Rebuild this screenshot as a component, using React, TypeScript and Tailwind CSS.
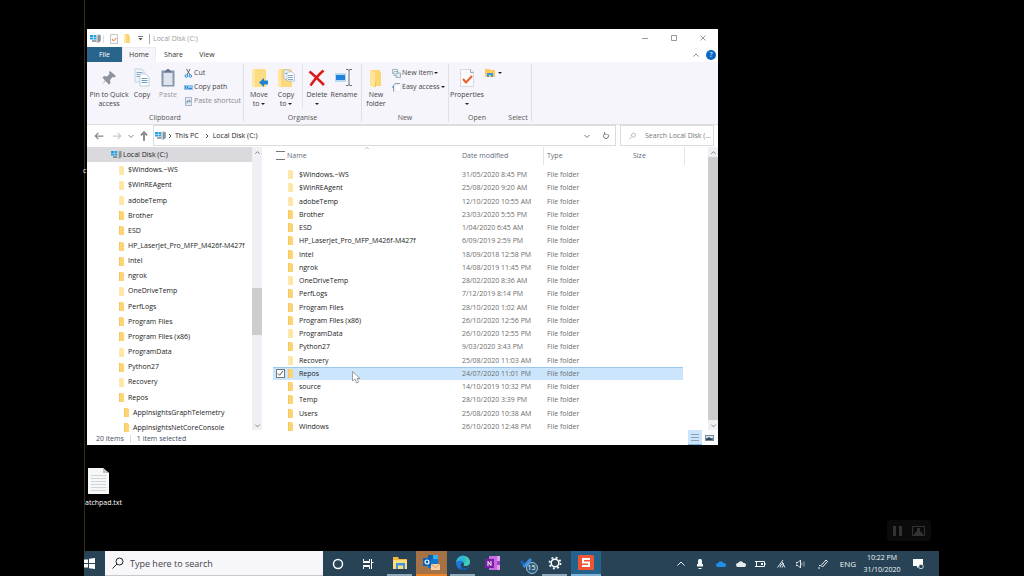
import React, { FC, ReactNode, useState } from 'react';

interface Folder {
  name: string;
  date: string;
  pale?: boolean;
}

const folders: Folder[] = [
  { name: '$Windows.~WS', date: '31/05/2020 8:45 PM', pale: true },
  { name: '$WinREAgent', date: '25/08/2020 9:20 AM', pale: true },
  { name: 'adobeTemp', date: '12/10/2020 10:55 AM', pale: true },
  { name: 'Brother', date: '23/03/2020 5:55 PM' },
  { name: 'ESD', date: '1/04/2020 6:45 AM' },
  { name: 'HP_LaserJet_Pro_MFP_M426f-M427f', date: '6/09/2019 2:59 PM' },
  { name: 'Intel', date: '18/09/2018 12:58 PM' },
  { name: 'ngrok', date: '14/08/2019 11:45 PM' },
  { name: 'OneDriveTemp', date: '28/02/2020 8:36 AM', pale: true },
  { name: 'PerfLogs', date: '7/12/2019 8:14 PM' },
  { name: 'Program Files', date: '28/10/2020 1:02 AM' },
  { name: 'Program Files (x86)', date: '26/10/2020 12:56 PM' },
  { name: 'ProgramData', date: '26/10/2020 12:55 PM', pale: true },
  { name: 'Python27', date: '9/03/2020 3:43 PM' },
  { name: 'Recovery', date: '25/08/2020 11:03 AM', pale: true },
  { name: 'Repos', date: '24/07/2020 11:01 PM' },
  { name: 'source', date: '14/10/2019 10:32 PM' },
  { name: 'Temp', date: '28/10/2020 3:39 PM' },
  { name: 'Users', date: '25/08/2020 10:38 AM' },
  { name: 'Windows', date: '26/10/2020 12:48 PM' }
];

const treeFolders = folders.slice(0, 16);
const repoFolders = ['AppInsightsGraphTelemetry', 'AppInsightsNetCoreConsole'];

interface IconProps {
  className?: string;
}

const FolderIcon: FC<{ pale?: boolean }> = ({ pale }) => (
  <svg viewBox="0 0 5 9" className="h-[9px] w-[5px] shrink-0">
    <path d="M0 0h4v1h1v8H0z" fill={pale ? '#ffe7a3' : '#fdd373'} />
    <path d="M0 0h1v9H0z" fill={pale ? '#fbe9bd' : '#f3c766'} />
  </svg>
);

const DriveIcon: FC = () => (
  <svg viewBox="0 0 11 9" className="h-[9px] w-[11px] shrink-0">
    <path d="M6 1.500L8.500 0 11 1.500V7L8 9 6 8z" fill="#c3c8cd" />
    <path d="M8 1.500l2.500-.5v6L8 8.500z" fill="#8b939b" />
    <path d="M0 1h3v2H0zM3.500 1H6v2H3.500zM0 3.500h3v2H0zM3.500 3.500H6v2H3.500z" fill="#22a0e0" />
    <path d="M2 6.500h4v1H2z" fill="#3e4d5b" />
  </svg>
);

const Chevron: FC<IconProps & { d: string }> = ({ d, className = 'h-2 w-2' }) => (
  <svg viewBox="0 0 8 8" className={className} fill="none" stroke="currentColor">
    <path d={d} />
  </svg>
);
const UP = 'M1.500 5.500L4 3l2.500 2.500';
const DOWN = 'M1.500 3L4 5.500 6.500 3';
const RIGHT = 'M3 2l2 2-2 2';

const Caret: FC = () => (
  <svg viewBox="0 0 4 2" className="inline-block h-[2px] w-1 align-middle">
    <path d="M0 0h4L2 2z" fill="#222" />
  </svg>
);

const PinIcon = () => (
  <svg viewBox="0 0 20 20" className="size-5">
    <path
      d="M11 3l6 5-2 1.500-1.500-.5-2.500 3 .5 3-1.500 1.500-3.500-3.500L3 17l3-4.500L3.500 9.500 5 8l3 .5L10.500 6 10 4z"
      fill="#8c949c"
    />
  </svg>
);

const CopyIcon = () => (
  <svg viewBox="0 0 20 20" className="size-5">
    <path d="M3 1h7l2 2v11H3z" fill="#eef3f8" stroke="#bccbd8" strokeWidth=".8" />
    <path d="M4.500 4.500h6M4.500 6.500h6M4.500 8.500h6" stroke="#82a9ca" />
    <path d="M8 6h6l3 3v9H8z" fill="#fff" stroke="#b4c4d2" strokeWidth=".8" />
    <path d="M9.500 10.500h6M9.500 12.500h6M9.500 14.500h6" stroke="#6d9dc5" />
  </svg>
);

const PasteIcon = () => (
  <svg viewBox="0 0 20 20" className="size-5">
    <rect x="3.500" y="2.500" width="13" height="16" fill="#8797ad" />
    <rect x="5.500" y="5" width="9" height="12" fill="#dde4ee" />
    <path d="M7 4V2.500h1.500L9 1h2l.5 1.500H13V4z" fill="#66748a" />
  </svg>
);

const MoveIcon = () => (
  <svg viewBox="0 0 20 20" className="size-5">
    <path d="M3 1h13l1 1v17H3z" fill="#fbdc83" />
    <path d="M3 1h3v18H3z" fill="#ffe7a6" />
    <path d="M10 14.500l5-4.500v2.500h4v4h-4V19z" fill="#2382d0" />
  </svg>
);

const CopyToIcon = () => (
  <svg viewBox="0 0 20 20" className="size-5">
    <path d="M2 1h12l2 1v17H2z" fill="#fbd97c" />
    <path d="M2 1h3v18H2z" fill="#ffe6a2" />
    <path d="M8 2h5l1 1v8H8z" fill="#f4f8fc" stroke="#a2b6c8" strokeWidth=".7" />
    <path d="M11 4h5l2.500 2v7H11z" fill="#fff" stroke="#a2b6c8" strokeWidth=".7" />
    <path d="M12 7.500h5M12 9.500h5M12 11.500h5M9 5.500h2" stroke="#6391bb" strokeWidth=".8" />
  </svg>
);

const DeleteIcon = () => (
  <svg viewBox="0 0 20 20" className="size-5">
    <path d="M2.500 3.500Q8 8 17 17M16.500 2.500Q10 8 3.500 17.500" stroke="#dc1717" strokeWidth="2.500" fill="none" />
  </svg>
);

const RenameIcon = () => (
  <svg viewBox="0 0 20 20" className="size-5">
    <path d="M1 5h11v9H1z" fill="#b9d9f3" />
    <path d="M2 7h9v5H2z" fill="#1f83dc" />
    <path d="M12 1.500h2l1 .8 1-.8h2M12 17.500h2l1-.8 1 .8h2M15 2v15" stroke="#6a747d" fill="none" />
  </svg>
);

const NewFolderIcon = () => (
  <svg viewBox="0 0 20 20" className="size-5">
    <path d="M4 2h10v2h1v14H4z" fill="#fcd675" />
    <path d="M4 2l5 2v16l-5-3z" fill="#ffe49b" />
    <path d="M9 14h1v5H9z" fill="#f1bf57" />
  </svg>
);

const PropertiesIcon = () => (
  <svg viewBox="0 0 20 20" className="size-5">
    <path d="M3.500 1.500h10l3 3v14h-13z" fill="#fbfbfd" stroke="#d0d2d8" strokeWidth=".8" />
    <path d="M13.500 1.500v3h3" fill="none" stroke="#8b9198" strokeWidth=".8" />
    <path d="M6 11l3 3.500L15 8" fill="none" stroke="#e9642a" strokeWidth="2" />
  </svg>
);

const ScissorsIcon = () => (
  <svg viewBox="0 0 9 9" className="size-[9px]" fill="none">
    <path d="M2.500 0l3.500 6M6 0L3 6" stroke="#5b6b7a" />
    <circle cx="2.300" cy="7" r="1.300" stroke="#2d8fdb" />
    <circle cx="6.300" cy="7" r="1.300" stroke="#2d8fdb" />
  </svg>
);

const CopyPathIcon = () => (
  <svg viewBox="0 0 9 9" className="size-[9px]">
    <path d="M0 2h9v5H0z" fill="#8fc8f2" />
    <path d="M1 3l1 3M3 3l1 3M5 5.500h3" stroke="#1d6fb5" strokeWidth=".8" />
  </svg>
);

const ShortcutIcon = () => (
  <svg viewBox="0 0 9 9" className="size-[9px]">
    <path d="M1.500.5h6v8h-6z" fill="#e6ebf2" stroke="#9aa9bd" strokeWidth=".8" />
    <path d="M3 6.500V4h3M5 3l1.500 1L5 5.500" fill="none" stroke="#5d7da6" strokeWidth=".8" />
  </svg>
);

const NewItemIcon = () => (
  <svg viewBox="0 0 9 9" className="size-[9px]" fill="#fff" stroke="#8ba0b0" strokeWidth=".8">
    <path d="M.5.5h5v4h-5z" />
    <path d="M2 2.500h4v4H2z" />
    <path d="M4 4h4.500v4.500H4z" fill="#dcebf7" />
  </svg>
);

const EasyAccessIcon = () => (
  <svg viewBox="0 0 9 9" className="size-[9px]" fill="none">
    <path d="M1.500 8.500v-6L3 .5h5" stroke="#8ba0b0" />
    <path d="M3 2h5.500v6.500H3z" fill="#fff" stroke="#dfe5ea" strokeWidth=".6" />
    <path d="M0 4h2" stroke="#2d8fdb" />
  </svg>
);

interface BigButtonProps {
  icon: ReactNode;
  lines: string[];
  caret?: boolean;
  className: string;
}
const BigButton: FC<BigButtonProps> = ({ icon, lines, caret, className }) => (
  <button type="button" className={`flex shrink-0 flex-col items-center whitespace-nowrap ${className}`}>
    {icon}
    {lines.map((line, i) => (
      <span key={line} className={`leading-[9px] ${i === 0 ? 'mt-0.5' : ''}`}>
        {line} {caret && i === 1 && <Caret />}
      </span>
    ))}
    {caret && lines.length === 1 && (
      <span className="leading-[9px]">
        <Caret />
      </span>
    )}
  </button>
);

const SmallButton: FC<{ icon: ReactNode; label: string; caret?: boolean; className?: string }> = ({
  icon,
  label,
  caret,
  className = ''
}) => (
  <button type="button" className={`flex h-[14px] items-center gap-px whitespace-nowrap ${className}`}>
    {icon}
    <span>{label}</span>
    {caret && <Caret />}
  </button>
);

const Group: FC<{ label: string; className: string; children?: ReactNode }> = ({
  label,
  className,
  children
}) => (
  <section className={`flex shrink-0 flex-col justify-between ${className}`}>
    <div className="flex items-start">{children}</div>
    <h2 className="text-center leading-[8px] text-[#555]">{label}</h2>
  </section>
);

const TitleBar = () => (
  <header className="flex h-[18px] items-center justify-between">
    <div className="flex items-center pt-px pl-[3px] text-[#999]">
      <DriveIcon />
      <span className="ml-0.5 h-2 w-px bg-[#ddd]" />
      <svg viewBox="0 0 8 10" className="ml-1.5 h-2.5 w-2">
        <path d="M.5.500h7v9h-7z" fill="#fafafa" stroke="#b9b9bd" strokeWidth=".8" />
        <path d="M2 5l1.500 2L6.500 4" fill="none" stroke="#ea6d35" />
      </svg>
      <svg viewBox="0 0 7 9" className="ml-1.5 h-[9px] w-[7px]">
        <path d="M0 0h5v2h1v7H0z" fill="#fbd57c" />
        <path d="M0 0l2 1v8H0z" fill="#ffe7a8" />
      </svg>
      <svg viewBox="0 0 5 5" className="ml-[7px] size-[5px]">
        <path d="M0 .5h5" stroke="#777" />
        <path d="M.5 2h4l-2 2.500z" fill="#555" />
      </svg>
      <span className="mr-[3px] ml-1.5 h-2.5 w-px bg-[#aaa]" />
      <h1>Local Disk (C:)</h1>
    </div>
    <div className="flex items-center gap-[21px] pr-[11px] text-[#999]">
      <button type="button" aria-label="Minimise">
        <Chevron d="M1 4.500h6" />
      </button>
      <button type="button" aria-label="Maximise">
        <Chevron d="M1.500 1.500h5v5h-5z" />
      </button>
      <button type="button" aria-label="Close">
        <Chevron d="M1.500 1.500l5 5M6.500 1.500l-5 5" />
      </button>
    </div>
  </header>
);

const Tabs = () => (
  <nav className="flex h-[15px] items-stretch justify-between">
    <div className="flex text-[#333]">
      <button type="button" className="w-[35px] bg-[#28648c] pt-px text-white">
        File
      </button>
      <button type="button" className="w-[34px] border-x border-t border-[#ececf2] bg-[#f5f5fb]">
        Home
      </button>
      <button type="button" className="w-[35px] pt-px">
        Share
      </button>
      <button type="button" className="w-8 pt-px">
        View
      </button>
    </div>
    <div className="flex items-center gap-1.5 pr-0.5 text-[#888]">
      <button type="button" aria-label="Collapse ribbon">
        <Chevron d={UP} />
      </button>
      <button
        type="button"
        aria-label="Help"
        className="size-2.5 rounded-full bg-[#0a68c4] text-center leading-[10px] text-white">
        ?
      </button>
    </div>
  </nav>
);

const Ribbon = () => (
  <div className="flex h-[63px] border-b border-[#dedee2] bg-[#f5f5fb] py-0.5 text-[#444]">
    <Group label="Clipboard" className="w-[157px] border-r border-[#dfe0e6]">
      <BigButton icon={<PinIcon />} lines={['Pin to Quick', 'access']} className="mt-1 w-[44px]" />
      <BigButton icon={<CopyIcon />} lines={['Copy']} className="mt-1 w-[22px]" />
      <div className="mt-1 text-[#999]">
        <BigButton icon={<PasteIcon />} lines={['Paste']} className="w-[30px]" />
      </div>
      <div className="ml-px flex flex-col pt-0.5">
        <SmallButton icon={<ScissorsIcon />} label="Cut" />
        <SmallButton icon={<CopyPathIcon />} label="Copy path" />
        <SmallButton icon={<ShortcutIcon />} label="Paste shortcut" className="text-[#888]" />
      </div>
    </Group>
    <Group label="Organise" className="w-[118px] border-r border-[#dfe0e6]">
      <BigButton icon={<MoveIcon />} lines={['Move', 'to']} caret className="mt-1 w-[30px]" />
      <BigButton icon={<CopyToIcon />} lines={['Copy', 'to']} caret className="mt-1 w-6" />
      <span className="ml-1 h-[44px] w-px bg-[#e2e3e8]" />
      <BigButton icon={<DeleteIcon />} lines={['Delete']} caret className="mt-1 w-7" />
      <BigButton icon={<RenameIcon />} lines={['Rename']} className="mt-1 w-[26px]" />
    </Group>
    <Group label="New" className="w-[87px] border-r border-[#dfe0e6]">
      <BigButton icon={<NewFolderIcon />} lines={['New', 'folder']} className="mt-1 w-[28px]" />
      <div className="ml-0.5 flex flex-col pt-0.5">
        <SmallButton icon={<NewItemIcon />} label="New item" caret />
        <SmallButton icon={<EasyAccessIcon />} label="Easy access" caret />
      </div>
    </Group>
    <Group label="Open" className="w-[56px]">
      <BigButton icon={<PropertiesIcon />} lines={['Properties']} caret className="mt-1 w-[36px]" />
      <button type="button" aria-label="Open" className="mt-[5px] flex items-center gap-[3px]">
        <svg viewBox="0 0 10 8" className="h-2 w-2.5">
          <path d="M0 0h4l1 1h5v7H0z" fill="#fccb57" />
          <path d="M2 4h6v4H6V6H4v2H2z" fill="#3d9be6" />
        </svg>
        <Caret />
      </button>
    </Group>
    <Group label="Select" className="w-[27px] border-r border-[#dfe0e6]" />
  </div>
);

const AddressBar = () => (
  <div className="flex h-[21px] items-center gap-1 pr-1 text-[#222]">
    <div className="flex shrink-0 items-center pl-[7px] text-[#888]">
      <button type="button" aria-label="Back">
        <Chevron d="M7.500 4H1M3.500 1.500L1 4l2.500 2.500" className="size-2.5" />
      </button>
      <button type="button" aria-label="Forward" className="ml-2 text-[#ccc]">
        <Chevron d="M.5 4H7M4.500 1.500L7 4 4.500 6.500" className="size-2.5" />
      </button>
      <button type="button" aria-label="Recent locations" className="ml-[5px]">
        <Chevron d={DOWN} />
      </button>
      <button type="button" aria-label="Up" className="ml-1">
        <Chevron d="M4 8V1M1.500 3.500L4 1l2.500 2.500" className="size-2.5 stroke-[1.5]" />
      </button>
    </div>
    <div className="flex h-[21px] min-w-0 flex-1 items-center border border-[#dcdcdc] pl-px">
      <DriveIcon />
      <Chevron d={RIGHT} className="size-2 text-[#555]" />
      <a href="#pc" className="ml-px">
        This PC
      </a>
      <Chevron d={RIGHT} className="ml-1 size-2 text-[#555]" />
      <a href="#c" className="ml-0.5">
        Local Disk (C:)
      </a>
      <button type="button" aria-label="Previous locations" className="mr-[11px] ml-auto text-[#777]">
        <Chevron d={DOWN} />
      </button>
      <button type="button" aria-label="Refresh" className="mr-[5px] text-[#777]">
        <Chevron d="M5.500 2A2.500 2.500 0 1 1 2.500 2M2.500 .2v2h2" />
      </button>
    </div>
    <label className="flex h-[21px] w-[94px] shrink-0 items-center border border-[#dcdcdc] pl-2">
      <Chevron d="M0 7.500l3-3M3 4.500a2 2 0 1 1 3 0 2 2 0 0 1-3 0" className="size-2 shrink-0 text-[#bbb]" />
      <input
        type="text"
        aria-label="Search"
        placeholder="Search Local Disk (..."
        className="ml-2 w-full min-w-0 outline-none placeholder:text-[#777]"
      />
    </label>
  </div>
);

const ScrollButton: FC<{ d: string; label: string }> = ({ d, label }) => (
  <button
    type="button"
    aria-label={label}
    className="flex h-2.5 w-full shrink-0 items-center justify-center text-[#777]">
    <Chevron d={d} className="size-[7px]" />
  </button>
);

const TreePane = () => (
  <aside className="flex h-[283px] w-[175px] shrink-0">
    <div className="min-w-0 flex-1 text-[#222]">
      <ul className="grid h-[288px] auto-rows-fr whitespace-nowrap">
        <li className="flex items-center gap-px bg-[#d9d9de] pl-6">
          <DriveIcon />
          Local Disk (C:)
        </li>
        {treeFolders.map((folder) => (
          <li key={folder.name} className="flex items-center gap-1 pt-px pl-8">
            <FolderIcon pale={folder.pale} />
            {folder.name}
          </li>
        ))}
        {repoFolders.map((name) => (
          <li key={name} className="flex items-center gap-1 pt-px pl-[37px]">
            <FolderIcon />
            {name}
          </li>
        ))}
      </ul>
    </div>
    <div className="flex w-2.5 flex-col bg-[#f0f0f4]">
      <ScrollButton d={UP} label="Scroll up" />
      <div className="flex flex-1 flex-col justify-end pb-[85px]">
        <div className="h-[47px] bg-[#cdcdcd]" />
      </div>
      <ScrollButton d={DOWN} label="Scroll down" />
    </div>
  </aside>
);

const FileList = () => {
  const [selected, setSelected] = useState('Repos');
  return (
    <div className="min-w-0 flex-1 pr-[25px] pl-[11px]">
      <table className="h-[286px] w-full table-fixed border-separate border-spacing-0 text-left whitespace-nowrap">
        <colgroup>
          <col className="w-[26px]" />
          <col />
          <col className="w-[81px]" />
          <col className="w-[90px]" />
          <col className="w-[50px]" />
        </colgroup>
        <thead className="leading-[18px] text-[#5f6b7a]">
          <tr className="h-[21px] align-top">
            <th className="px-0 pt-1 pl-[3px] font-normal">
              <input
                type="checkbox"
                aria-label="Select all"
                className="block size-[9px] appearance-none border-y border-[#777] bg-white"
              />
            </th>
            <th className="p-0 font-normal">
              <span className="relative -ml-3 block">
                Name
                <Chevron d={UP} className="absolute top-[-2px] left-[77px] size-1.5 text-[#aaa]" />
              </span>
            </th>
            <th className="p-0 font-normal">Date modified</th>
            <th className="p-0 font-normal">
              <div className="border-l border-[#e4e4e8] pl-[3px]">Type</div>
            </th>
            <th className="p-0 font-normal">
              <div className="-mr-0.5 border-r border-[#e4e4e8]">Size</div>
            </th>
          </tr>
        </thead>
        <tbody className="text-[#6d6d6d]">
          {folders.map((folder) => {
            const isSelected = folder.name === selected;
            return (
              <tr
                key={folder.name}
                onClick={() => setSelected(folder.name)}
                className={isSelected ? 'bg-[#cbe6fc] shadow-[inset_0_1px_0_#9ac7ee]' : ''}>
                <td className="p-0">
                  <div className="flex items-center justify-between pr-1.5 pl-[3px]">
                    {isSelected ? (
                      <span className="flex size-[9px] items-center justify-center border border-[#777] bg-white text-[#333]">
                        <Chevron d="M1 4l2 2 4-5" className="size-[7px]" />
                      </span>
                    ) : (
                      <span />
                    )}
                    <FolderIcon pale={folder.pale} />
                  </div>
                </td>
                <td className="p-0 pt-px text-[#222]">{folder.name}</td>
                <td className="p-0 pt-px">{folder.date}</td>
                <td className="p-0 pt-px pl-1">File folder</td>
                <td className="p-0" />
              </tr>
            );
          })}
        </tbody>
      </table>
    </div>
  );
};

const StatusBar = () => (
  <footer className="flex h-[15px] items-center justify-between text-[#3f4d63]">
    <div className="flex items-center pt-0.5 pl-[9px]">
      <span>20 items</span>
      <span className="mx-1.5 h-2 w-px bg-[#ddd]" />
      <span>1 item selected</span>
    </div>
    <div className="flex items-center self-stretch pr-1">
      <button
        type="button"
        aria-label="Details"
        className="flex h-full w-3.5 items-center justify-center border-b border-[#7fb5e2] bg-[#cbe6fc]">
        <Chevron d="M0 1.500h8M0 4.500h8M0 7.500h8" className="size-2 text-[#8ba0b1]" />
      </button>
      <button type="button" aria-label="Large icons" className="ml-[3px]">
        <svg viewBox="0 0 9 6" className="h-1.5 w-[9px]">
          <path d="M0 0h9v6H0z" fill="#7a8996" />
          <path d="M1 1h7v2H1z" fill="#cfe4f4" />
          <path d="M1 4l3-2 4 3H1z" fill="#2f4b5e" />
        </svg>
      </button>
    </div>
  </footer>
);

const Explorer = () => (
  <main className="mt-[29px] mr-[221px] ml-0.5 bg-white text-[7px] leading-[10px]">
    <TitleBar />
    <Tabs />
    <Ribbon />
    <AddressBar />
    <div className="flex h-[284px] pt-px">
      <TreePane />
      <FileList />
      <div className="flex w-2.5 flex-col bg-[#f0f0f4]">
        <ScrollButton d={UP} label="Scroll list up" />
        <div className="flex-1 bg-[#cdcdcd]" />
        <ScrollButton d={DOWN} label="Scroll list down" />
      </div>
    </div>
    <StatusBar />
  </main>
);

interface TaskButtonProps {
  label: string;
  className: string;
  children: ReactNode;
}
const TaskButton: FC<TaskButtonProps> = ({ label, className, children }) => (
  <button type="button" aria-label={label} className={`flex h-full shrink-0 items-center justify-center ${className}`}>
    {children}
  </button>
);

const TaskApps = () => (
  <div className="flex h-full">
    <TaskButton label="Cortana" className="w-[29px]">
      <svg viewBox="0 0 12 12" className="size-3">
        <circle cx="6" cy="6" r="4.500" fill="none" stroke="#fff" strokeWidth="1.500" />
      </svg>
    </TaskButton>
    <TaskButton label="Task view" className="w-[31px]">
      <svg viewBox="0 0 12 12" className="size-3" fill="none" stroke="#fff">
        <path d="M1.500 1v2.500h6V1M1.500 11V8.500h6V11M1 4.500h7M1 7.500h7M9.500 1v10M9 4.500h2.500" />
      </svg>
    </TaskButton>
    <TaskButton label="File Explorer" className="mx-1 w-[25px] border-b-2 border-[#8fa9ba]">
      <svg viewBox="0 0 16 13" className="h-[13px] w-4">
        <path d="M1 1h5l1 2h8v10H1z" fill="#f3b73f" />
        <path d="M1 4h14v9H1z" fill="#fddb7e" />
        <path d="M4 7h9v6h-2V9.500H6V13H4z" fill="#3f95dc" />
      </svg>
    </TaskButton>
    <TaskButton label="Outlook" className="w-[31px] border-b-2 border-[#f08222] bg-[#a47246]">
      <svg viewBox="0 0 17 17" className="size-[17px]">
        <path d="M5 1h10v13H5z" fill="#1277cf" />
        <path d="M5 1h5v4H5z" fill="#0f5ba8" />
        <path d="M10 1h5v4h-5z" fill="#35b1f0" />
        <path d="M0 4h8v8H0z" fill="#0a61b8" />
        <circle cx="4" cy="8" r="2" fill="none" stroke="#fff" strokeWidth="1.200" />
        <path d="M8 10h9v6H8z" fill="#f9cfa5" />
        <path d="M8 10l4.500 3.500L17 10" fill="none" stroke="#d98a4b" strokeWidth=".8" />
      </svg>
    </TaskButton>
    <TaskButton label="Edge" className="mx-[3px] w-[25px] border-b-2 border-[#8fa9ba]">
      <svg viewBox="0 0 16 16" className="size-4">
        <path d="M1 8a7 7 0 0 1 14-1c0 3-2.500 4-5 4-1.500 0-1.200-1-1-2C9 6 3 5 1 8z" fill="#2fb5d6" />
        <path d="M9 1.200c4 .3 6 3 6 5.800-.3 3-2.500 4-5 4-1.500 0-1.200-1-1-2 2-2 2-5 0-7.800z" fill="#41cbb0" />
        <path d="M1 8c2-3.500 7-3 8 0-2-1-3.500.5-3 2.500.6 3 4.500 3.500 8 1.500A7.200 7.200 0 0 1 1 8z" fill="#1b7ad4" />
        <path d="M6 10.500c.6 3 4.500 3.500 8 1.500-1.500 2.500-4 3.500-6.500 3C5 14 5 12 6 10.500z" fill="#1259ad" />
      </svg>
    </TaskButton>
    <TaskButton label="OneNote" className="w-[29px]">
      <svg viewBox="0 0 16 15" className="h-[15px] w-4">
        <path d="M4 0h11v14H4z" fill="#c86be2" />
        <path d="M12 0h3v14h-3z" fill="#e29df2" />
        <path d="M12 5h3v4h-3z" fill="#a13fc4" />
        <path d="M0 3h9v9H0z" fill="#7a1fa2" />
        <path d="M3 10V5.500l3 4V5" fill="none" stroke="#fff" />
      </svg>
    </TaskButton>
    <TaskButton label="To Do" className="w-[35px] pl-2">
      <span className="relative flex h-4 w-5 items-start">
        <svg viewBox="0 0 14 11" className="mt-0.5 h-[11px] w-3.5">
          <path d="M1 4l2-2 4 4-2 3z" fill="#1b60b5" />
          <path d="M3.500 8L11 0l2 2-7.500 8z" fill="#3b8fe2" />
        </svg>
        <span className="absolute right-px -bottom-0.5 size-3 rounded-full border border-[#9cc3da] bg-[#2c5c7c] text-center text-[7px] leading-[10px] text-white">
          15
        </span>
      </span>
    </TaskButton>
    <TaskButton label="Settings" className="mr-1 w-[25px] border-b-2 border-[#8fa9ba]">
      <svg viewBox="0 0 14 14" className="size-3.5" fill="none" stroke="#fff">
        <circle cx="7" cy="7" r="3.800" strokeWidth="1.500" />
        <circle cx="7" cy="7" r="5.500" strokeWidth="1.800" strokeDasharray="1.900 2.420" />
      </svg>
    </TaskButton>
    <TaskButton label="Snagit" className="w-[30px] border-b-2 border-[#7fb4d8] bg-[#24628c]">
      <svg viewBox="0 0 16 15" className="h-[15px] w-4">
        <rect width="16" height="15" rx="1.500" fill="#ee5535" />
        <path d="M12 4H5v3.500h6V11H4" fill="none" stroke="#fff" strokeWidth="2" />
      </svg>
    </TaskButton>
  </div>
);

const Tray = () => (
  <div className="flex h-full items-center text-[#f2f6f8]">
    <Chevron d="M.5 5.500L4 2l3.500 3.500" />
    <svg viewBox="0 0 8 10" className="ml-[11px] h-2.5 w-2" fill="currentColor">
      <rect x="2" width="4" height="7" rx="1.500" />
      <path d="M1 5h6v2.500H1zM2.500 9h3v1h-3z" />
    </svg>
    <svg viewBox="0 0 10 6" className="ml-3 h-1.5 w-2.5">
      <path d="M2 6a2 2 0 0 1 0-4 3 3 0 0 1 5.500 0A2 2 0 0 1 8.500 6z" fill="#1f8fe8" />
    </svg>
    <svg viewBox="0 0 10 6" className="ml-2.5 h-1.5 w-2.5">
      <path d="M2 6a2 2 0 0 1 0-4 3 3 0 0 1 5.500 0A2 2 0 0 1 8.500 6z" fill="#e8ecee" />
    </svg>
    <svg viewBox="0 0 11 8" className="ml-[9px] h-2 w-[11px]" fill="none" stroke="currentColor">
      <path d="M1.500 1.500h8v5h-8zM10 4h1M0 1.500h2M0 6.500h2" />
      <path d="M6 3h2v2H6z" fill="currentColor" stroke="none" />
    </svg>
    <svg viewBox="0 0 9 9" className="ml-[11px] size-[9px]" fill="none" stroke="currentColor" strokeWidth=".9">
      <path d="M.5 8.500L6 1M3 8.500a4 4 0 0 1 4-4M5 8.500a2 2 0 0 1 2-2M5 3l3 5.500" />
    </svg>
    <svg viewBox="0 0 10 10" className="ml-2.5 size-2.5" fill="none" stroke="currentColor" strokeWidth=".9">
      <path d="M0 3.500h2L4.500 1v8L2 6.500H0z" />
      <path d="M6 3.500v3M8 2.500v5" opacity=".6" />
    </svg>
    <svg viewBox="0 0 10 10" className="ml-3 size-2.5" fill="none" stroke="currentColor">
      <path d="M3 6.500L8 1l1.500 1.500L4.500 8zM0 9h2M1 6.500h1.500" />
    </svg>
    <span className="ml-3 text-[8px]">ENG</span>
    <time className="ml-1.5 w-10 text-center text-[7px] leading-[12px]">
      10:22 PM
      <br />
      31/10/2020
    </time>
    <button type="button" aria-label="Notifications" className="mr-[15px] ml-[11px]">
      <svg viewBox="0 0 11 10" className="h-2.5 w-[11px]">
        <path d="M0 0h10v7H7L4 9V7H0z" fill="#fff" />
        <circle cx="8" cy="7.500" r="2.300" fill="#274355" stroke="#fff" strokeWidth=".8" />
      </svg>
    </button>
  </div>
);

const Taskbar = () => (
  <div className="flex h-[25px] shrink-0 items-center justify-between bg-[#274355]">
    <div className="flex h-full">
      <TaskButton label="Start" className="w-[21px] justify-start">
        <svg viewBox="0 0 11 11" className="size-[11px]" fill="#fff">
          <path d="M0 1.500h4V5H0zM5 .8l6-.8v5H5zM0 6h4v3.500H0zM5 6h6v5l-6-.8z" />
        </svg>
      </TaskButton>
      <label className="flex h-full w-[218px] items-center border-b border-[#c8c8c8] bg-[#f6f6fb] pl-[7px]">
        <svg viewBox="0 0 12 12" className="size-3 shrink-0" fill="none" stroke="#222">
          <circle cx="7.500" cy="4.500" r="3.500" />
          <path d="M5 7l-4.500 4.500" />
        </svg>
        <input
          type="text"
          aria-label="Search Windows"
          placeholder="Type here to search"
          className="ml-1.5 w-full min-w-0 pt-px text-[9px] outline-none placeholder:text-[#444]"
        />
      </label>
      <TaskApps />
    </div>
    <Tray />
  </div>
);

const App: FC = () => (
  <div className="flex h-screen flex-col bg-black pr-[85px] pl-[84px] font-['Open_Sans','Noto_Sans',sans-serif]">
    <div className="relative flex-1 border-l border-[#3a2a10]">
      <Explorer />
      {/* desktop icons, partly off the left edge of the shared screen */}
      <span className="absolute top-[165px] -left-0.5 text-[7px] leading-[12px] text-white">c</span>
      <div className="absolute top-[468px] left-0 w-[60px] text-[7px] leading-[10px] text-white">
        <svg viewBox="0 0 21 26" className="ml-[3px] h-[26px] w-[21px]">
          <path d="M0 0h15l6 5v21H0z" fill="#f7f7f7" />
          <path d="M15 0v5h6z" fill="#c2c2c2" />
          <path d="M3 7.500h15M3 10.500h15M3 13.500h15M3 16.500h15M3 19.500h15M3 22.500h15" stroke="#cfd5da" />
        </svg>
        <p className="mt-1">atchpad.txt</p>
      </div>
      <svg viewBox="0 0 9 13" className="absolute top-[371px] left-[267px] h-[13px] w-[9px]">
        <path d="M.5.5v9.500l2.500-2 1.500 4 2-1-1.500-3.500h3z" fill="#fff" stroke="#888" strokeWidth=".8" />
      </svg>
      <div className="absolute right-2 bottom-2.5 flex h-[21px] items-center gap-2.5 rounded-sm bg-[#0b0b0b] px-1.5 text-[#333]">
        <svg viewBox="0 0 9 10" className="h-2.5 w-[9px]" fill="currentColor">
          <path d="M0 0h3v10H0zM6 0h3v10H6z" />
        </svg>
        <svg viewBox="0 0 13 10" className="h-2.5 w-[13px]" fill="currentColor">
          <path d="M.5.500h12v9H.5z" fill="none" stroke="currentColor" />
          <path d="M5 2h3v3l3 3v1H2V8l3-3z" />
        </svg>
      </div>
    </div>
    <Taskbar />
  </div>
);

export default App;
